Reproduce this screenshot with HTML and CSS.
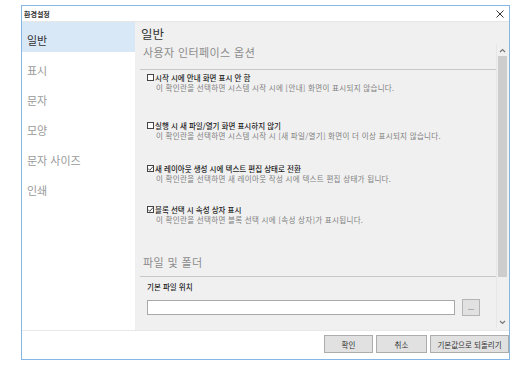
FILE: index.html
```html
<!DOCTYPE html>
<html lang="ko">
<head>
    <meta charset="UTF-8">
    <title>환경설정</title>
    <link rel="stylesheet" href="styles.css">
</head>
<body>
    <div class="window">
        <!-- Title bar -->
        <div class="titlebar">
            <span class="title">환경설정</span>
            <svg class="close" width="8" height="8" viewBox="0 0 8 8">
                <path d="M0.5 0.5L7.5 7.5M7.5 0.5L0.5 7.5" stroke="#333" stroke-width="1" fill="none"/>
            </svg>
        </div>

        <div class="main">
            <!-- Category list -->
            <nav class="sidebar">
                <div class="nav-item active">일반</div>
                <div class="nav-item">표시</div>
                <div class="nav-item">문자</div>
                <div class="nav-item">모양</div>
                <div class="nav-item">문자 사이즈</div>
                <div class="nav-item">인쇄</div>
            </nav>

            <!-- Settings pane -->
            <section class="content">
                <h1 class="heading">일반</h1>
                <div class="scroll">
                    <div class="scroll-body">
                        <h2 class="section-title">사용자 인터페이스 옵션</h2>
                        <div class="section-line"></div>

                        <div class="options">
                            <div class="opt">
                                <div class="opt-label"><span class="check"></span>시작 시에 안내 화면 표시 안 함</div>
                                <div class="opt-desc">이 확인란을 선택하면 시스템 시작 시에 [안내] 화면이 표시되지 않습니다.</div>
                            </div>
                            <div class="opt">
                                <div class="opt-label"><span class="check"></span>실행 시 새 파일/열기 화면 표시하지 않기</div>
                                <div class="opt-desc">이 확인란을 선택하면 시스템 시작 시 [새 파일/열기] 화면이 더 이상 표시되지 않습니다.</div>
                            </div>
                            <div class="opt">
                                <div class="opt-label"><span class="check checked"><svg width="7" height="7" viewBox="0 0 7 7"><path d="M1 3.5L2.8 5.3L6 1.5" stroke="#333" stroke-width="0.9" fill="none"/></svg></span>새 레이아웃 생성 시에 텍스트 편집 상태로 전환</div>
                                <div class="opt-desc">이 확인란을 선택하면 새 레이아웃 작성 시에 텍스트 편집 상태가 됩니다.</div>
                            </div>
                            <div class="opt">
                                <div class="opt-label"><span class="check checked"><svg width="7" height="7" viewBox="0 0 7 7"><path d="M1 3.5L2.8 5.3L6 1.5" stroke="#333" stroke-width="0.9" fill="none"/></svg></span>블록 선택 시 속성 상자 표시</div>
                                <div class="opt-desc">이 확인란을 선택하면 블록 선택 시에 [속성 상자]가 표시됩니다.</div>
                            </div>
                        </div>

                        <h2 class="section-title second">파일 및 폴더</h2>
                        <div class="section-line"></div>

                        <div class="field-label">기본 파일 위치</div>
                        <div class="field-row">
                            <div class="path-input"></div>
                            <button class="browse">...</button>
                        </div>
                    </div>

                    <!-- Scrollbar -->
                    <div class="scrollbar">
                        <svg class="arrow" width="7" height="5" viewBox="0 0 7 5"><path d="M1 4L3.5 1.5L6 4" stroke="#777" stroke-width="1.2" fill="none"/></svg>
                        <div class="thumb"></div>
                        <div class="track-rest"></div>
                        <svg class="arrow" width="7" height="5" viewBox="0 0 7 5"><path d="M1 1L3.5 3.5L6 1" stroke="#777" stroke-width="1.2" fill="none"/></svg>
                    </div>
                </div>
            </section>
        </div>

        <!-- Dialog buttons -->
        <footer class="footer">
            <button class="btn ok">확인</button>
            <button class="btn cancel">취소</button>
            <button class="btn reset">기본값으로 되돌리기</button>
        </footer>
    </div>
</body>
</html>
```

FILE: styles.css
```css
* {
    margin: 0;
    padding: 0;
    box-sizing: border-box;
    font-family: "Noto Sans CJK KR", "Noto Sans", sans-serif;
}

body {
    background-color: #ffffff;
    padding: 5px 0 0 21px;
}

.window {
    width: 489px;
    height: 355px;
    border: 1px solid #86b6e6;
    display: flex;
    flex-direction: column;
    background-color: #ffffff;
}

.titlebar {
    height: 16px;
    display: flex;
    align-items: center;
    justify-content: space-between;
    padding: 0 5px 0 2px;
    border-bottom: 1px solid #e6e6e6;
}

.title {
    font-size: 7px;
    font-weight: 700;
    color: #333333;
}

.main {
    height: 308px;
    display: flex;
}

.sidebar {
    width: 113px;
    background-color: #ffffff;
}

.nav-item {
    height: 30px;
    padding: 6px 0 0 5px;
    line-height: 24px;
    font-size: 11px;
    color: #9a9a9a;
}

.nav-item.active {
    background-color: #d9e8f7;
    color: #333333;
}

.content {
    flex: 1;
    background-color: #f0f0f0;
    padding: 0 2px 2px 5px;
    display: flex;
    flex-direction: column;
}

.heading {
    font-size: 12.5px;
    font-weight: 400;
    color: #333333;
    line-height: 20px;
    padding: 2px 0 0 1px;
}

.scroll {
    flex: 1;
    display: flex;
}

.scroll-body {
    flex: 1;
}

.section-title {
    font-size: 11px;
    font-weight: 400;
    color: #8c8c8c;
    line-height: 16px;
    padding-left: 3px;
    margin-bottom: 9px;
    letter-spacing: 0.4px;
}

.section-title.second {
    margin-top: 29px;
    margin-bottom: 6px;
}

.section-line {
    border-top: 1px solid #c8c8c8;
}

.options {
    margin-top: 2px;
    display: flex;
    flex-direction: column;
}

.opt:nth-child(2) {
    margin-top: 27px;
}

.opt:nth-child(3) {
    margin-top: 22px;
}

.opt:nth-child(4) {
    margin-top: 20px;
}

.opt-label {
    display: flex;
    align-items: center;
    padding-left: 7px;
    height: 10px;
    font-size: 7.5px;
    font-weight: 500;
    color: #1e1e1e;
}

.check {
    width: 7px;
    height: 7px;
    border: 1px solid #444444;
    background-color: #ffffff;
    margin-right: 1px;
    display: flex;
    align-items: center;
    justify-content: center;
}

.check svg {
    flex-shrink: 0;
}

.opt-desc {
    padding-left: 16px;
    height: 11px;
    line-height: 11px;
    font-size: 7.5px;
    color: #808080;
    letter-spacing: 0.3px;
}

.field-label {
    margin-top: 5px;
    padding-left: 7px;
    line-height: 10px;
    font-size: 7.5px;
    font-weight: 500;
    color: #1e1e1e;
}

.field-row {
    margin-top: 7px;
    padding: 0 16px 0 7px;
    display: flex;
    align-items: center;
    gap: 7px;
}

.path-input {
    flex: 1;
    height: 15px;
    background-color: #ffffff;
    border: 1px solid #a8a8a8;
}

.browse {
    width: 18px;
    height: 17px;
    background-color: #e1e1e1;
    border: 1px solid #b4b4b4;
    font-size: 7px;
    color: #555555;
    line-height: 1;
}

.scrollbar {
    width: 11px;
    display: flex;
    flex-direction: column;
    align-items: center;
    border-left: 1px solid #e6e6e6;
}

.arrow {
    margin: 4px 0 3px;
    flex-shrink: 0;
}

.thumb {
    width: 9px;
    height: 221px;
    background-color: #cdcdcd;
}

.track-rest {
    flex: 1;
}

.footer {
    flex: 1;
    border-top: 1px solid #e8e8e8;
    display: flex;
    justify-content: flex-end;
    align-items: flex-start;
    padding: 4px 0 0 0;
    background-color: #ffffff;
}

.btn {
    height: 18px;
    background-color: #e1e1e1;
    border: 1px solid #adadad;
    font-size: 7.5px;
    color: #333333;
}

.btn.ok {
    width: 49px;
    margin-right: 3px;
}

.btn.cancel {
    width: 51px;
    margin-right: 3px;
}

.btn.reset {
    width: 79px;
}
```
